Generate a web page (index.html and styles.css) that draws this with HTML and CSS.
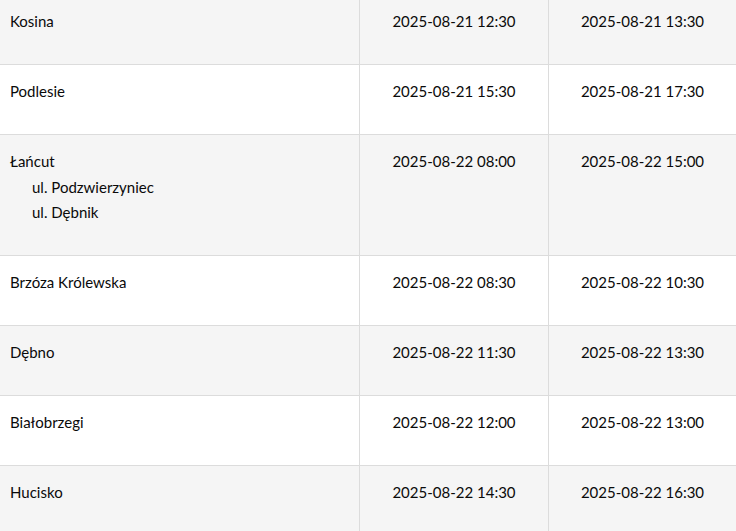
FILE: index.html
```html
<!DOCTYPE html>
<html lang="pl">
<head>
<meta charset="utf-8">
<title>Harmonogram</title>
<link rel="stylesheet" href="styles.css">
</head>
<body>
<table class="schedule">
  <colgroup>
    <col class="col-place">
    <col class="col-from">
    <col class="col-to">
  </colgroup>
  <tbody>
    <tr class="row-alt">
      <td class="place">Kosina</td>
      <td class="time">2025-08-21 12:30</td>
      <td class="time">2025-08-21 13:30</td>
    </tr>
    <tr>
      <td class="place">Podlesie</td>
      <td class="time">2025-08-21 15:30</td>
      <td class="time">2025-08-21 17:30</td>
    </tr>
    <tr class="row-alt">
      <td class="place">Łańcut
        <ul class="streets">
          <li>ul. Podzwierzyniec</li>
          <li>ul. Dębnik</li>
        </ul>
      </td>
      <td class="time">2025-08-22 08:00</td>
      <td class="time">2025-08-22 15:00</td>
    </tr>
    <tr>
      <td class="place">Brzóza Królewska</td>
      <td class="time">2025-08-22 08:30</td>
      <td class="time">2025-08-22 10:30</td>
    </tr>
    <tr class="row-alt">
      <td class="place">Dębno</td>
      <td class="time">2025-08-22 11:30</td>
      <td class="time">2025-08-22 13:30</td>
    </tr>
    <tr>
      <td class="place">Białobrzegi</td>
      <td class="time">2025-08-22 12:00</td>
      <td class="time">2025-08-22 13:00</td>
    </tr>
    <tr class="row-alt">
      <td class="place">Hucisko</td>
      <td class="time">2025-08-22 14:30</td>
      <td class="time">2025-08-22 16:30</td>
    </tr>
  </tbody>
</table>
</body>
</html>
```
FILE: styles.css
```css
html, body {
  margin: 0;
  padding: 0;
  background: #ffffff;
}

body {
  font-family: Lato, "Open Sans", "DejaVu Sans", sans-serif;
  font-size: 15px;
  line-height: 25.5px;
  color: #0a0a0a;
  overflow: hidden;
}

.schedule {
  width: 736px;
  table-layout: fixed;
  border-collapse: separate;
  border-spacing: 0;
  margin-top: -5px;
}

.col-place { width: 360px; }
.col-from { width: 189px; }
.col-to { width: 187px; }

.schedule td {
  box-sizing: border-box;
  vertical-align: top;
  padding: 14px 10px 29.5px 10px;
  border-bottom: 1px solid #dcdcdc;
}

.schedule td:not(:last-child) {
  border-right: 1px solid #dcdcdc;
}

.row-alt td {
  background: #f5f5f5;
}

.time {
  text-align: center;
}

.streets {
  list-style: none;
  margin: 0;
  padding: 0 0 0 22px;
}
```
